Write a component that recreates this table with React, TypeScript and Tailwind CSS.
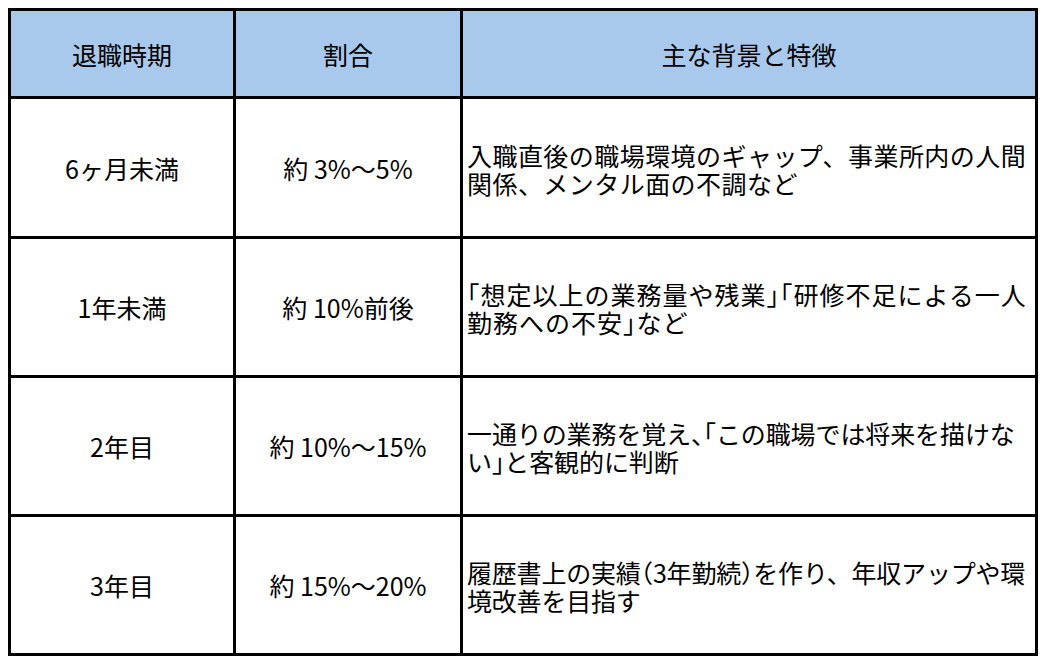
const rows: { period: string; rate: string; track: string; lines: React.ReactNode[] }[] = [
  {
    period: "6ヶ月未満",
    rate: "約 3%～5%",
    track: "tracking-[0.45px]",
    lines: ["入職直後の職場環境のギャップ、事業所内の人間", "関係、メンタル面の不調など"],
  },
  {
    period: "1年未満",
    rate: "約 10%前後",
    track: "tracking-[1px]",
    lines: [
      <>
        <Half>「</Half>想定以上の業務量や残業<Half>」「</Half>研修不足による一人
      </>,
      <>
        勤務への不安<Half>」</Half>など
      </>,
    ],
  },
  {
    period: "2年目",
    rate: "約 10%～15%",
    track: "tracking-[-0.1px]",
    lines: [
      <>
        一通りの業務を覚え<Half>、「</Half>この職場では将来を描けな
      </>,
      <>
        い<Half>」</Half>と客観的に判断
      </>,
    ],
  },
  {
    period: "3年目",
    rate: "約 15%～20%",
    track: "tracking-[-0.2px]",
    lines: [
      <>
        履歴書上の実績<Half>（</Half>3年勤続<Half>）</Half>を作り、年収アップや環
      </>,
      "境改善を目指す",
    ],
  },
];

function Half({ children }: { children: React.ReactNode }) {
  return <span className="[font-feature-settings:'halt']">{children}</span>;
}

export default function App() {
  return (
    <div className="bg-white w-[1048px] h-[662px] pt-[8px] pl-[8px] font-['Noto_Sans_CJK_JP',sans-serif] text-black text-[25px] leading-[28px]">
      <div className="inline-grid grid-cols-[222px_224px_572px] grid-rows-[85px_137px_136px_136px_136px] gap-[3px] p-[3px] bg-black">
        <HeaderCell>退職時期</HeaderCell>
        <HeaderCell>割合</HeaderCell>
        <HeaderCell>主な背景と特徴</HeaderCell>

        {rows.map((r) => (
          <Row key={r.period} {...r} />
        ))}
      </div>
    </div>
  );
}

function HeaderCell({ children }: { children: React.ReactNode }) {
  return <div className="bg-[#a9c9ec] flex items-center justify-center">{children}</div>;
}

function Row({
  period,
  rate,
  track,
  lines,
}: {
  period: string;
  rate: string;
  track: string;
  lines: React.ReactNode[];
}) {
  return (
    <>
      <div className="bg-white flex items-center justify-center">{period}</div>
      <div className="bg-white flex items-center justify-center whitespace-pre">{rate}</div>
      <div className={`bg-white flex flex-col justify-center pl-[4px] pt-[2px] whitespace-nowrap overflow-hidden ${track}`}>
        {lines.map((l, i) => (
          <div key={i}>{l}</div>
        ))}
      </div>
    </>
  );
}
